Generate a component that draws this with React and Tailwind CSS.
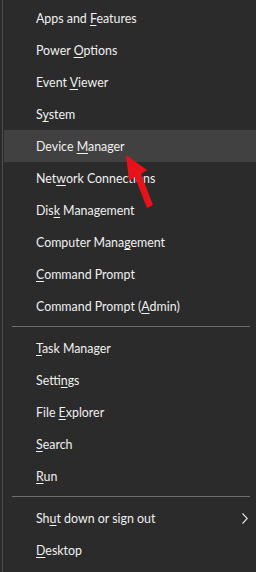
import React from "react";

function Item({ pre, u, post, active, chevron }) {
  return (
    <div
      className={`h-8 flex items-center pl-[32px] pr-2 relative ${active ? "bg-[#414141]" : ""}`}
    >
      <span className="text-[12.4px] text-[#f0f0f0] leading-none pt-[2px]">
        {pre}
        <span className="underline underline-offset-[2px] decoration-[1px]">{u}</span>
        {post}
      </span>
      {chevron && (
        <svg className="absolute right-[8px] top-[11px]" width="6" height="11" viewBox="0 0 6 11">
          <path d="M0.5 0.5 L5.3 5.5 L0.5 10.5" fill="none" stroke="#e6e6e6" strokeWidth="1.1" />
        </svg>
      )}
    </div>
  );
}

function Sep() {
  return (
    <div className="h-[10px] pt-[4px] pl-[8px] pr-[6px]">
      <div className="h-px bg-[#6e6e6e]" />
    </div>
  );
}

export default function App() {
  return (
    <div
      className="w-[256px] h-[572px] bg-[#2b2b2b] pl-[2px] relative overflow-hidden"
      style={{ fontFamily: 'Lato, "Noto Sans", sans-serif' }}
    >
      <div className="h-full border-l border-[#4c4c4c] pl-px pt-[2px]">
        <Item pre="Apps and " u="F" post="eatures" />
        <Item pre="Power " u="O" post="ptions" />
        <Item pre="Event " u="V" post="iewer" />
        <Item pre="S" u="y" post="stem" />
        <Item pre="Device " u="M" post="anager" active />
        <Item pre="Net" u="w" post="ork Connections" />
        <Item pre="Dis" u="k" post=" Management" />
        <Item pre="Computer Mana" u="g" post="ement" />
        <Item pre="" u="C" post="ommand Prompt" />
        <Item pre="Command Prompt (" u="A" post="dmin)" />
        <Sep />
        <Item pre="" u="T" post="ask Manager" />
        <Item pre="Setti" u="n" post="gs" />
        <Item pre="File " u="E" post="xplorer" />
        <Item pre="" u="S" post="earch" />
        <Item pre="" u="R" post="un" />
        <Sep />
        <Item pre="Sh" u="u" post="t down or sign out" chevron />
        <Item pre="" u="D" post="esktop" />
      </div>
      <svg className="absolute left-[120px] top-[150px]" width="40" height="62" viewBox="0 0 40 62">
        <polygon points="6,5 9,31 15,27 27,58 33,55 21,24 27,20" fill="#e8121b" />
      </svg>
    </div>
  );
}
